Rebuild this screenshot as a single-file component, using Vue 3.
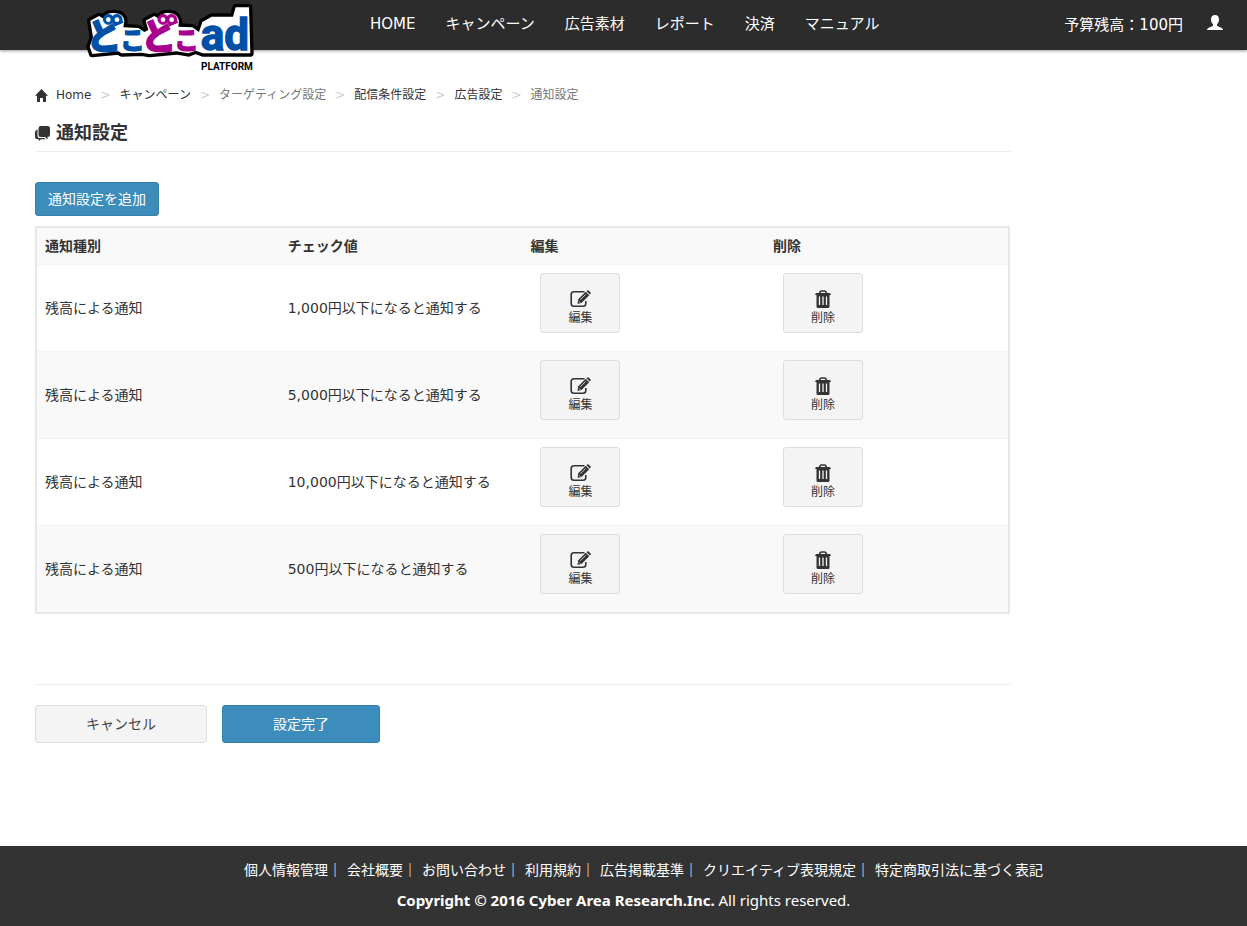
<script setup>
import { ref } from 'vue'

const navItems = ['HOME', 'キャンペーン', '広告素材', 'レポート', '決済', 'マニュアル']

const crumbs = [
  { label: 'Home', link: true, home: true },
  { label: 'キャンペーン', link: true },
  { label: 'ターゲティング設定', link: false },
  { label: '配信条件設定', link: true },
  { label: '広告設定', link: true },
  { label: '通知設定', link: false },
]

const notices = ref([
  { id: 1, type: '残高による通知', amount: '1,000' },
  { id: 2, type: '残高による通知', amount: '5,000' },
  { id: 3, type: '残高による通知', amount: '10,000' },
  { id: 4, type: '残高による通知', amount: '500' },
])

const footerLinks = [
  '個人情報管理',
  '会社概要',
  'お問い合わせ',
  '利用規約',
  '広告掲載基準',
  'クリエイティブ表現規定',
  '特定商取引法に基づく表記',
]

function removeNotice(id) {
  notices.value = notices.value.filter((n) => n.id !== id)
}
</script>

<template>
  <div class="page">
    <header class="navbar">
      <a href="#" class="logo" aria-label="どこどこad PLATFORM">
        <svg width="172" height="76" viewBox="27 0 516 228">
          <!-- 文字の下に敷く白い台紙 -->
          <path class="plate" d="M46 62 72 48 86 56Q92 36 124 40 146 42 148 64L145 82 190 84 208 96 220 90 212 62 238 48 252 56Q258 36 288 40 308 42 312 64L310 80 352 82 372 96 382 66 410 50H474L482 22H522L526 160H384L362 152 340 160 304 154 224 162 200 158 140 160 130 154 52 162 44 140 54 112z" />
          <g class="blue">
            <text class="kana-lg" x="36" y="148">ど</text>
            <text class="kana-sm" x="136" y="148">こ</text>
            <circle cx="100" cy="58" r="16" />
            <circle cx="126" cy="58" r="16" />
          </g>
          <g class="pink">
            <text class="kana-lg" x="200" y="148">ど</text>
            <text class="kana-sm" x="298" y="148">こ</text>
            <circle cx="264" cy="58" r="16" />
            <circle cx="290" cy="58" r="16" />
          </g>
          <g class="eyes">
            <circle cx="100" cy="59" r="7" />
            <circle cx="126" cy="59" r="7" />
            <circle cx="264" cy="59" r="7" />
            <circle cx="290" cy="59" r="7" />
          </g>
          <text class="latin blue" x="377" y="151">ad</text>
          <text class="platform" x="378" y="210">PLATFORM</text>
        </svg>
      </a>
      <nav class="nav">
        <a v-for="item in navItems" :key="item" href="#">{{ item }}</a>
      </nav>
      <div class="account">
        <span>予算残高：100円</span>
        <a href="#" class="user" aria-label="アカウント">
          <svg width="16" height="16" viewBox="0 0 16 16">
            <path d="M8 0C5.600 0 4 1.600 4 4.200c0 2.200.8 4 2 5v1.300c-.3.700-1.200 1-2.300 1.400C1.500 12.700 0 13.300 0 15h16c0-1.700-1.500-2.300-3.700-3.100-1.100-.4-2-.7-2.300-1.400V9.200c1.200-1 2-2.800 2-5C12 1.600 10.400 0 8 0z" />
          </svg>
        </a>
      </div>
    </header>

    <main class="content">
      <ol class="breadcrumb">
        <li v-for="crumb in crumbs" :key="crumb.label">
          <svg v-if="crumb.home" width="13" height="13" viewBox="0 0 13 13">
            <path d="M6.500 0 13 6.700h-2V13H8V9H5v4H2V6.700H0z" />
          </svg>
          <a v-if="crumb.link" href="#">{{ crumb.label }}</a>
          <span v-else>{{ crumb.label }}</span>
        </li>
      </ol>

      <h1 class="title">
        <svg width="15" height="15" viewBox="0 0 15 15">
          <path d="M5.500 0h7Q15 0 15 2.500v6q0 2.500-2.500 2.500v2.500L10 11H5.500Q3.500 11 3.500 9V2.500Q3.500 0 5.500 0z" />
          <path d="M2.500 3.500V10q0 2 2 2h4.800l1.200 1.200H6L3.800 15v-1.800H2.500Q0 13.200 0 10.700V6.500q0-2.500 2.500-3z" />
        </svg>
        通知設定
      </h1>

      <button type="button" class="btn btn-primary">通知設定を追加</button>

      <table class="table">
        <thead>
          <tr>
            <th>通知種別</th>
            <th>チェック値</th>
            <th>編集</th>
            <th>削除</th>
          </tr>
        </thead>
        <tbody>
          <tr v-for="notice in notices" :key="notice.id">
            <td>{{ notice.type }}</td>
            <td>{{ notice.amount }}円以下になると通知する</td>
            <td>
              <button type="button" class="btn-app">
                <svg width="21" height="18" viewBox="0 0 21 18">
                  <path class="line" d="M14.500 1.700H4Q1.200 1.700 1.200 4.500v9Q1.200 16.300 4 16.300h9q2.800 0 2.800-2.800V11" />
                  <path d="M7.500 14l.8-4.800L15.700 1.800l3.500 3.500-7.400 7.400z" />
                  <path d="M16.500 1.200l.7-.7q.7-.7 1.400 0l1.900 1.900q.7.700 0 1.400l-.7.700z" />
                  <path class="glint" d="M10.300 9.800l5.400-5.400M9 11.300l1.300 1.300" />
                </svg>
                編集
              </button>
            </td>
            <td>
              <button type="button" class="btn-app" @click="removeNotice(notice.id)">
                <svg width="16" height="18" viewBox="0 0 16 18">
                  <path class="line" d="M4.500 3.500Q5 1 6.500 1h3q1.500 0 2 2.500" />
                  <path d="M1.500 3h13q1 0 1.500 2H0q.5-2 1.500-2z" />
                  <path d="M1.500 5h13v11.500q0 1.500-1.500 1.500H3q-1.500 0-1.500-1.500z" />
                  <path class="slit" d="M4.500 6.500V15M8 6.500V15M11.500 6.500V15" />
                </svg>
                削除
              </button>
            </td>
          </tr>
        </tbody>
      </table>

      <div class="actions">
        <button type="button" class="btn btn-default btn-wide">キャンセル</button>
        <button type="button" class="btn btn-primary btn-wide">設定完了</button>
      </div>
    </main>

    <footer class="footer">
      <ul>
        <li v-for="link in footerLinks" :key="link">
          <a href="#">{{ link }}</a>
        </li>
      </ul>
      <p><strong>Copyright © 2016 Cyber Area Research.Inc.</strong> All rights reserved.</p>
    </footer>
  </div>
</template>

<style>
body {
  margin: 0;
  background: #fff;
}
</style>

<style scoped>
.page {
  display: flex;
  flex-direction: column;
  min-height: 100vh;
  font-family: "DejaVu Sans", "Noto Sans CJK JP", sans-serif;
  font-size: 14px;
  line-height: 20px;
  color: #333;
}

.page * {
  box-sizing: border-box;
}

a {
  color: inherit;
  text-decoration: none;
}

button {
  font-family: inherit;
  cursor: pointer;
}

svg {
  display: block;
  flex: none;
  fill: currentColor;
}

/* ヘッダー */
.navbar {
  display: flex;
  align-items: flex-start;
  height: 50px;
  padding: 0 24px 0 84px;
  background: #2c2c2c;
  box-shadow: 0 1px 3px rgba(0, 0, 0, 0.4);
  color: #fff;
  font-size: 15px;
}

.logo {
  margin-right: 99px;
}

.nav {
  display: flex;
}

.nav a {
  padding: 14px 15px;
}

.account {
  display: flex;
  align-items: center;
  gap: 24px;
  margin-left: auto;
  padding: 15px 0;
}

.user svg {
  margin-bottom: 4px;
}

.plate {
  fill: #fff;
  stroke: #000;
  stroke-width: 20px;
  stroke-linejoin: round;
  paint-order: stroke;
}

.blue {
  fill: #0050a8;
  stroke: #0050a8;
}

.pink {
  fill: #a8008c;
  stroke: #a8008c;
}

.kana-lg,
.kana-sm {
  font-family: "Noto Sans CJK JP", sans-serif;
  font-weight: 900;
  stroke-width: 3px;
}

.kana-lg {
  font-size: 108px;
}

.kana-sm {
  font-size: 74px;
}

.latin {
  font-family: Roboto, sans-serif;
  font-size: 132px;
  font-weight: 700;
  stroke-width: 4px;
}

.eyes {
  fill: #fff;
}

.platform {
  fill: #000;
  font-family: Roboto, sans-serif;
  font-size: 30px;
  font-weight: 700;
}

/* 本文 */
.content {
  width: calc((100% - 40px) * 10 / 12);
  box-sizing: border-box;
  margin-left: 20px;
  padding: 35px 15px 40px;
}

.breadcrumb {
  display: flex;
  flex-wrap: wrap;
  margin: 0 0 18px;
  padding: 0;
  list-style: none;
  font-size: 12px;
  color: #777;
}

.breadcrumb li {
  display: flex;
  align-items: center;
}

.breadcrumb li + li::before {
  content: ">";
  padding: 0 9px;
  color: #ccc;
}

.breadcrumb a,
.breadcrumb svg {
  color: #333;
}

.breadcrumb svg {
  margin-right: 8px;
}

.title {
  display: flex;
  align-items: center;
  gap: 6px;
  margin: 0 0 30px;
  padding-bottom: 8px;
  border-bottom: 1px solid #eee;
  font-size: 18px;
  line-height: 20px;
  font-weight: 700;
}

.btn {
  padding: 6px 12px;
  border: 1px solid;
  border-radius: 3px;
  font-size: 14px;
  line-height: 20px;
}

.btn-primary {
  background: #3c8dbc;
  border-color: #367fa9;
  color: #fff;
}

.btn-default {
  background: #f4f4f4;
  border-color: #ddd;
  color: #444;
}

.btn-wide {
  padding: 8px 50px;
}

.table {
  width: calc(100% - 1px);
  margin: 10px 0 70px;
  border: 2px solid #e8e8e8;
  border-spacing: 0;
  table-layout: fixed;
}

.table th,
.table td {
  padding: 8px;
  text-align: left;
  vertical-align: middle;
}

.table th {
  background: #f9f9f9;
}

.table td {
  border-top: 1px solid #f4f4f4;
}

.table tbody tr:nth-child(even) {
  background: #f9f9f9;
}

.btn-app {
  display: flex;
  flex-direction: column;
  align-items: center;
  gap: 1px;
  width: 80px;
  height: 60px;
  margin: 0 0 10px 10px;
  padding: 16px 5px 0;
  border: 1px solid #ddd;
  border-radius: 3px;
  background: #f4f4f4;
  color: #333;
  font-size: 12px;
  line-height: 18px;
}

.line {
  fill: none;
  stroke: currentColor;
  stroke-width: 1.6px;
}

.slit,
.glint {
  fill: none;
  stroke: #f4f4f4;
}

.slit {
  stroke-width: 1.3px;
}

.glint {
  stroke-width: 0.8px;
}

.actions {
  display: flex;
  gap: 15px;
  padding-top: 20px;
  border-top: 1px solid #eee;
}

/* フッター */
.footer {
  margin-top: auto;
  padding: 14px 0 16px;
  background: #333;
  color: #fff;
  text-align: center;
}

.footer ul {
  display: flex;
  flex-wrap: wrap;
  justify-content: center;
  gap: 0 5px;
  margin: 0 0 10px;
  padding: 0 0 0 40px;
  list-style: none;
}

.footer li:not(:last-child)::after {
  content: "｜";
}

.footer p {
  margin: 0;
  font-family: "Noto Sans", "Noto Sans CJK JP", sans-serif;
  font-size: 15px;
}
</style>
